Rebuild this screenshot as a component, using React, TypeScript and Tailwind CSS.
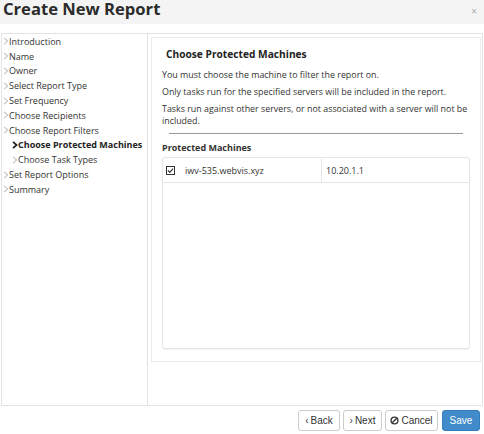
import React from "react";

const steps: { label: string; sub?: boolean; active?: boolean }[] = [
  { label: "Introduction" },
  { label: "Name" },
  { label: "Owner" },
  { label: "Select Report Type" },
  { label: "Set Frequency" },
  { label: "Choose Recipients" },
  { label: "Choose Report Filters" },
  { label: "Choose Protected Machines", sub: true, active: true },
  { label: "Choose Task Types", sub: true },
  { label: "Set Report Options" },
  { label: "Summary" },
];

function Chevron({ active }: { active?: boolean }) {
  return (
    <svg width="6" height="8" viewBox="0 0 6 8" className="shrink-0">
      <path
        d="M1 0.8 L4.6 4 L1 7.2"
        fill="none"
        stroke={active ? "#222" : "#c4c4c4"}
        strokeWidth={active ? 1.8 : 1.1}
      />
    </svg>
  );
}

export default function App() {
  return (
    <div
      className="w-[484px] h-[434px] bg-white overflow-hidden text-[#333] flex flex-col"
      style={{ fontFamily: '"Open Sans", "Noto Sans", sans-serif' }}
    >
      {/* Header */}
      <div className="h-[24px] bg-[#f4f4f4] flex items-start justify-between pl-[3px] pr-[7px] shrink-0">
        <div className="text-[16.6px] font-bold leading-[17px] text-[#2b2b2b]">Create New Report</div>
        <div className="text-[10px] text-[#aaa] leading-[10px] mt-[6px]">×</div>
      </div>
      <div className="h-[9px] shrink-0" />
      {/* Body */}
      <div className="ml-[1px] w-[482px] h-[373px] border border-[#e3e3e3] flex shrink-0">
        {/* Sidebar */}
        <div className="w-[146px] border-r border-[#e3e3e3] flex flex-col">
          {steps.map((s) => (
            <div
              key={s.label}
              className={`flex items-center h-[14.8px] text-[9px] leading-none ${
                s.sub ? "pl-[10px]" : "pl-[1px]"
              } ${s.active ? "font-bold text-[#222]" : "text-[#333]"}`}
            >
              <Chevron active={s.active} />
              <span className="whitespace-nowrap">{s.label}</span>
            </div>
          ))}
        </div>
        {/* Main */}
        <div className="flex-1 pt-[3px] pl-[3px] pr-[1px]">
          <div className="h-[325px] border border-[#ececec] bg-white pl-[10px] pr-[6px] pt-[8px]">
            <div className="text-[10.2px] font-bold leading-[16px] pl-[4px] text-[#222]">Choose Protected Machines</div>
            <div className="mt-[7px] text-[8.9px] leading-[12px] text-[#333] flex flex-col gap-[5px]">
              <p>You must choose the machine to filter the report on.</p>
              <p>Only tasks run for the specified servers will be included in the report.</p>
              <p>Tasks run against other servers, or not associated with a server will not be included.</p>
            </div>
            <div className="ml-[7px] mr-[11px] mt-[6px] border-t border-[#9a9a9a]" />
            <div className="mt-[7px] text-[9px] font-bold leading-[13px] text-[#333]">Protected Machines</div>
            <div className="mt-[3px] mr-[4px] h-[192px] border border-[#e6e6e6] rounded-[3px] shadow-[0_1px_2px_rgba(0,0,0,0.06)]">
              <div className="flex h-[24px] border-b border-[#e6e6e6] text-[9px] text-[#333] mt-[1px]">
                <div className="w-[159px] flex items-center pl-[3px] border-r border-[#e6e6e6]">
                  <svg width="9" height="9" viewBox="0 0 9 9" className="shrink-0">
                    <rect x="0.5" y="0.5" width="8" height="8" fill="none" stroke="#333" strokeWidth="1" />
                    <path d="M2 4.5 L3.8 6.3 L7 2.6" fill="none" stroke="#333" strokeWidth="1.2" />
                  </svg>
                  <span className="ml-[10px]">iwv-535.webvis.xyz</span>
                </div>
                <div className="flex-1 flex items-center pl-[4px]">10.20.1.1</div>
              </div>
            </div>
          </div>
        </div>
      </div>
      {/* Footer */}
      <div
        className="flex justify-end pr-[4px] mt-[4px] text-[10px]"
        style={{ fontFamily: '"Liberation Sans", Arial, sans-serif' }}
      >
        <button className="h-[21px] w-[42px] border border-[#ccc] rounded-[3px] bg-white text-[#333] flex items-center justify-center">
          <span className="mr-[2px]">‹</span>Back
        </button>
        <button className="ml-[3px] h-[21px] w-[39px] border border-[#ccc] rounded-[3px] bg-white text-[#333] flex items-center justify-center">
          <span className="mr-[2px]">›</span>Next
        </button>
        <button className="ml-[3px] h-[21px] w-[53px] border border-[#ccc] rounded-[3px] bg-white text-[#333] flex items-center justify-center">
          <svg width="9" height="9" viewBox="0 0 10 10" className="mr-[2px]">
            <circle cx="5" cy="5" r="3.8" fill="none" stroke="#333" strokeWidth="1.5" />
            <path d="M2.4 7.6 L7.6 2.4" stroke="#333" strokeWidth="1.5" />
          </svg>
          Cancel
        </button>
        <button className="ml-[4px] h-[21px] w-[38px] border border-[#357ebd] rounded-[3px] bg-[#428bca] text-white flex items-center justify-center">
          Save
        </button>
      </div>
    </div>
  );
}
